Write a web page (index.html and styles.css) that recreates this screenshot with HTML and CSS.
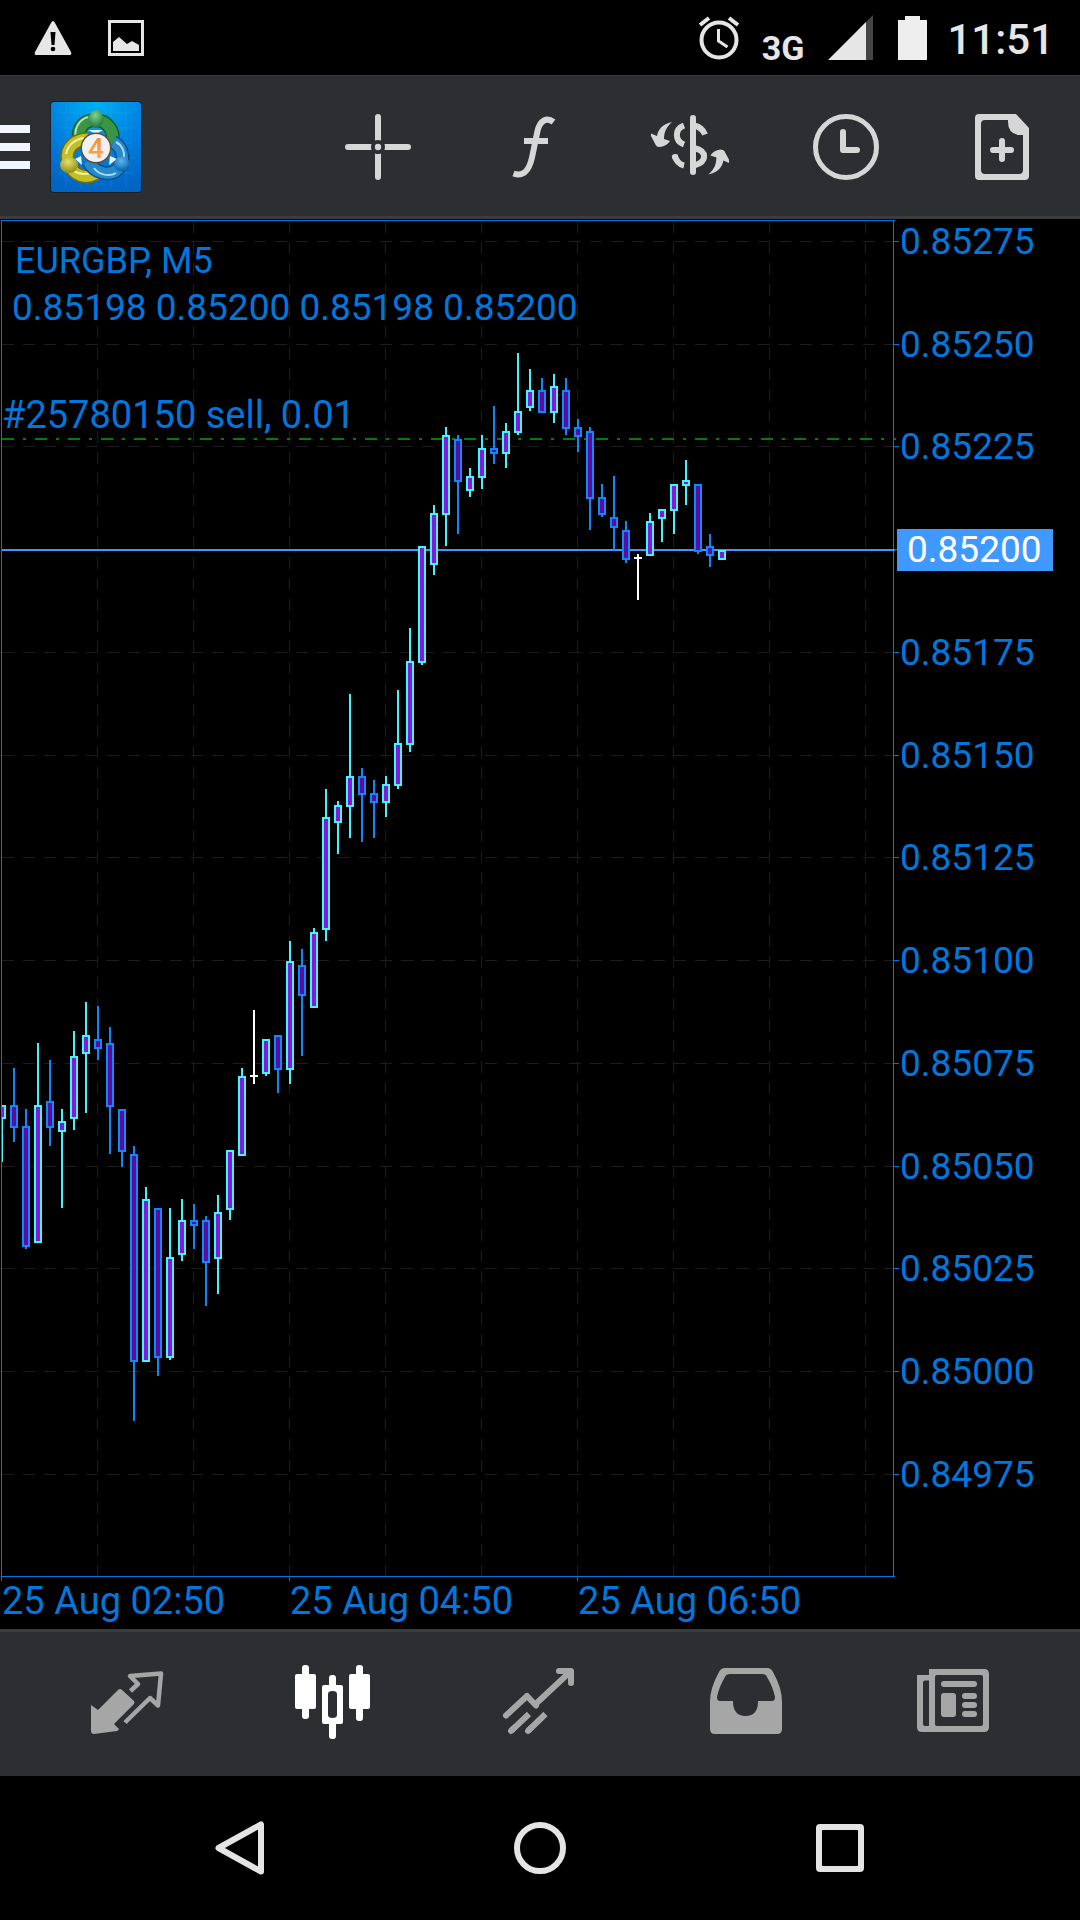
FILE: index.html
```html
<!DOCTYPE html>
<html lang="en">
<head>
<meta charset="utf-8">
<meta name="viewport" content="width=device-width, initial-scale=1">
<title>EURGBP, M5</title>
<link rel="stylesheet" href="styles.css">
</head>
<body>
<header class="status">
  <svg class="status-warning" width="38" height="34" viewBox="0 0 38 34" aria-hidden="true">
    <path fill="#e6e6e6" d="M19 0q1 0 2 2l16 29q1 3-1 3H2q-2 0-1-3L17 2q1-2 2-2Z"/>
    <path fill="#000" d="M16.500 11h5l-1 13h-3Z"/><circle cx="19" cy="28" r="2.300"/>
  </svg>
  <svg width="36" height="36" viewBox="0 0 36 36" aria-hidden="true">
    <rect x="1.500" y="1.500" width="33" height="33" fill="none" stroke="#e6e6e6" stroke-width="3"/>
    <path fill="#e6e6e6" d="M5 31v-9l6-5 8 7 5-3 7 4v6Z"/>
  </svg>
  <span class="status-space"></span>
  <svg class="status-alarm" width="42" height="44" viewBox="0 0 42 44" fill="none" stroke="#e6e6e6" aria-hidden="true">
    <circle cx="21" cy="24" r="17.500" stroke-width="4"/>
    <path stroke-width="4" d="M2 9l9-7M40 9l-9-7"/>
    <path stroke-width="3" d="M20.500 13v12l9 6"/>
  </svg>
  <span class="status-network">3G</span>
  <svg class="status-signal" width="45" height="45" viewBox="0 0 45 45" aria-hidden="true">
    <path fill="#444" d="M45 0v45H30V15Z"/><path fill="#e6e6e6" d="M38 7v38H0Z"/>
  </svg>
  <svg class="status-battery" width="29" height="44" viewBox="0 0 29 44" aria-hidden="true">
    <path fill="#eee" d="M7 0h15v4h7v40H0V4h7Z"/>
  </svg>
  <time class="status-time">11:51</time>
</header>

<div class="toolbar">
  <button class="menu" aria-label="Open menu">
    <svg width="30" height="46" viewBox="0 0 30 46" aria-hidden="true"><path fill="#f0f6ff" d="M0 1h30v8H0zM0 19h30v8H0zM0 37h30v8H0z"/></svg>
    <svg width="92" height="92" viewBox="0 0 92 92" aria-hidden="true">
      <defs>
        <radialGradient id="tile" cx=".5" cy="0" r="1"><stop offset="0" stop-color="#00b0f4"/><stop offset=".55" stop-color="#0080e0"/><stop offset="1" stop-color="#0064c4"/></radialGradient>
        <radialGradient id="green" cx=".45" cy=".3" r=".7"><stop offset="0" stop-color="#86d08c"/><stop offset="1" stop-color="#187a3a"/></radialGradient>
        <radialGradient id="yellow" cx=".45" cy=".3" r=".7"><stop offset="0" stop-color="#e4e070"/><stop offset="1" stop-color="#8f8f10"/></radialGradient>
        <radialGradient id="blue" cx=".45" cy=".3" r=".7"><stop offset="0" stop-color="#5cb8ee"/><stop offset="1" stop-color="#0460a8"/></radialGradient>
        <linearGradient id="digit" x1="0" x2="0" y1="0" y2="1"><stop offset="0" stop-color="#f08a28"/><stop offset="1" stop-color="#ffb050"/></linearGradient>
      </defs>
      <rect width="92" height="92" rx="4" fill="#1d1f24"/>
      <rect x="1" y="1" width="90" height="90" rx="3" fill="url(#tile)"/>
      <path stroke="#3aa8f4" stroke-opacity=".2" d="M8 12h76M8 27h76M8 42h76M8 57h76M8 72h76M16 4v84M31 4v84M46 4v84M61 4v84M76 4v84"/>
      <g fill="none">
        <path stroke="#116030" stroke-width="14" d="M32 44C24 30 33 19 45 19s23 12 15 28"/>
        <path stroke="#3a9644" stroke-width="11" d="M32 44C24 30 33 19 45 19s23 12 15 28"/>
        <path stroke="#b4dfae" stroke-width="2" d="M27 40C22 28 30 18 38 16"/>
        <path stroke="#706e08" stroke-width="14" d="M38 38C20 39 13 52 20 65s22 14 32 2"/>
        <path stroke="#c4bd2a" stroke-width="11" d="M38 38C20 39 13 52 20 65s22 14 32 2"/>
        <path stroke="#f4ef9c" stroke-width="2" d="M16 53C18 43 26 38 34 37M24 70c6 4 15 4 20 0"/>
        <path stroke="#09508e" stroke-width="14" d="M63 41c10 5 13 19 5 27s-24 4-30-8"/>
        <path stroke="#2589cc" stroke-width="11" d="M63 41c10 5 13 19 5 27s-24 4-30-8"/>
        <path stroke="#a8dcfa" stroke-width="2" d="M66 41c6 3 9 10 8 16M44 67c5 7 15 9 22 5"/>
      </g>
      <path fill="#eef3ee" d="M38 29h15l-7 4ZM25 58l6-3 1 9ZM67 58l-7-3-1 9Z"/>
      <ellipse cx="46" cy="18" rx="7.500" ry="9" fill="url(#green)"/>
      <ellipse cx="19" cy="64" rx="9" ry="8" fill="url(#yellow)"/>
      <ellipse cx="72" cy="63" rx="8" ry="7.500" fill="url(#blue)"/>
      <circle cx="46" cy="47" r="15.500" fill="#5a5038"/><circle cx="46" cy="47" r="14" fill="#f1f1f3"/>
      <text class="logo-digit" x="46" y="57" text-anchor="middle" fill="url(#digit)">4</text>
    </svg>
  </button>
  <div class="tools">
    <button class="tool" aria-label="Crosshair"><svg viewBox="0 0 78 78" aria-hidden="true"><g fill="#d6d6d6"><path d="M36 9a3 3 0 0 1 6 0v23.500q-3-1-6 0ZM36 69a3 3 0 0 0 6 0V45.500q-3 1-6 0ZM9 36a3 3 0 0 0 0 6h23.500q-1-3 0-6ZM69 36a3 3 0 0 1 0 6H45.500q1-3 0-6Z"/><circle cx="39" cy="39" r="3.200"/></g></svg></button>
    <button class="tool" aria-label="Indicators"><svg viewBox="0 0 78 78" fill="none" stroke="#d6d6d6" aria-hidden="true"><path stroke-width="6" d="M58.500 14C52 9 45 12 42.500 23L37 49.500C34 63 28 69 18.500 65.500M29 33h24"/></svg></button>
    <button class="tool" aria-label="Trade"><svg viewBox="0 0 78 78" fill="none" stroke="#d6d6d6" stroke-width="6" aria-hidden="true">
      <path stroke-linecap="round" d="M42 10v54"/><path d="M33 17.500C23.500 21 23.500 33 33 36.500"/><path d="M23.500 47Q26 56 33 57.500M43 17.500Q51 19 54 26.500M43 40C56.500 43 56.500 54 43 57.500"/><circle cx="24" cy="49" r="3" fill="#d6d6d6" stroke="none"/>
      <g fill="#d6d6d6" stroke="none"><path d="M21 14C11 16 7 22 6 28L0 25.500V28L5 37.500Q6 39 9 39 16 38 19 33L13 31C13 25 15 19 21 14Z"/><path transform="rotate(180 39.200 40.300)" d="M21 14C11 16 7 22 6 28L0 25.500V28L5 37.500Q6 39 9 39 16 38 19 33L13 31C13 25 15 19 21 14Z"/></g></svg></button>
    <button class="tool" aria-label="Timeframe"><svg viewBox="0 0 78 78" fill="none" stroke="#d6d6d6" aria-hidden="true"><circle cx="39" cy="39" r="30.500" stroke-width="5"/><path stroke-width="6" stroke-linecap="round" stroke-linejoin="round" d="M36 24v18h14"/></svg></button>
    <button class="tool" aria-label="New order"><svg viewBox="0 0 78 78" aria-hidden="true"><path fill="#d6d6d6" fill-rule="evenodd" d="M16 6h37l13 14v48q0 4-4 4H16q-4 0-4-4V10q0-4 4-4ZM22 12q-4 0-4 4v46q0 4 4 4h34q4 0 4-4V27h-5q-10-2-10-13v-2Z"/><path stroke="#d6d6d6" stroke-width="6" stroke-linecap="round" d="M39 33v18M30 42h18"/></svg></button>
  </div>
</div>

<main class="chart">
  <svg class="plot" viewBox="0 219 1080 1410" role="img" aria-label="EURGBP five minute candlestick chart">
    <defs><clipPath id="area"><rect x="2" y="221" width="892" height="1355"/></clipPath></defs>
    <g id="grid" class="grid"></g>
    <path class="order-line" d="M2 439H896"/>
    <path class="frame" d="M1 220.500H895M1.500 221V1581M1 1576.500H895M893.500 220V1577M289.500 1576v5M577.500 1576v5"/>
    <path class="price-line" d="M2 550H895"/>
    <g id="candles" clip-path="url(#area)"></g>
    <g class="label">
      <text class="symbol" x="15" y="273">EURGBP, M5</text>
      <text x="12" y="320">0.85198 0.85200 0.85198 0.85200</text>
      <text class="wide" x="2" y="428">#25780150 sell, 0.01</text>
      <text class="wide" x="2" y="1614">25 Aug 02:50</text>
      <text class="wide" x="290" y="1614">25 Aug 04:50</text>
      <text class="wide" x="578" y="1614">25 Aug 06:50</text>
    </g>
    <g id="scale" class="label"></g>
    <rect class="tag" x="897" y="529" width="156" height="42"/>
    <text class="label tag-text" x="907" y="562">0.85200</text>
  </svg>
</main>

<nav class="tabs" aria-label="Sections">
  <button class="tab" aria-label="Quotes"><svg viewBox="0 0 78 78" aria-hidden="true"><path fill="#a6a6a6" d="M3 40l7 5 20.500-20.500q1.500-1 3 0L46 36q1 1.500 0 3L26 59l5 5q0 1-2 2L6 69q-3 0-3-3Z"/><path fill="none" stroke="#a6a6a6" stroke-width="4.500" stroke-linejoin="round" d="M42.500 26l7.500-7-8-8 31-2.500-3 32-8-7.500L37 57.500"/></svg></button>
  <button class="tab" aria-label="Charts" aria-current="page"><svg viewBox="1 0 78 78" fill="#fff" aria-hidden="true"><rect x="1" y="9" width="21" height="35" rx="2"/><rect x="8" width="7" height="54" rx="3"/><path fill-rule="evenodd" d="M30 20h17q2 0 2 2v35q0 2-2 2H30q-2 0-2-2V22q0-2 2-2Zm8.500 6q-4.500 0-4.500 3v21q0 3 4.500 3t4.500-3V29q0-3-4.500-3Z"/><rect x="35" y="10" width="7" height="14" rx="3"/><rect x="35" y="55" width="7" height="19" rx="3"/><rect x="55" y="9" width="21" height="35" rx="2"/><rect x="62" width="7" height="56" rx="3"/></svg></button>
  <button class="tab" aria-label="Trade"><svg viewBox="0 0 78 78" fill="none" stroke="#a6a6a6" stroke-width="6" aria-hidden="true"><path stroke-linecap="round" stroke-linejoin="round" d="M5 50.500L26 31l9 9.500M58 6h12v12"/><path d="M33 40.500L70 6M10 66l18-17M27 66l17.500-17"/><path stroke-linecap="round" d="M10 66l3-3M27 66l3-3"/></svg></button>
  <button class="tab" aria-label="History"><svg viewBox="0 0 78 78" aria-hidden="true"><path fill="#a6a6a6" fill-rule="evenodd" d="M18 3h42q4 0 6 4 9 16 9 30v27q0 5-5 5H8q-5 0-5-5V37Q3 23 12 7q2-4 6-4Zm5 6q-4 0-5 3-6 10-8 20 0 4 3 4h13q0 15 12.500 15T51 36h14q3 0 3-4-2-10-8-20-1-3-5-3Z"/></svg></button>
  <button class="tab" aria-label="News"><svg viewBox="0 0 78 78" aria-hidden="true"><path fill="#a6a6a6" fill-rule="evenodd" d="M15 4h55q5 0 5 5v53q0 5-5 5H8q-5 0-5-5V10h12Zm8 6q-2 0-2 2v47q0 2 2 2h44q2 0 2-2V12q0-2-2-2Zm-12 5.500q-2 0-2 2V59q0 2 2 2h4V15.500Z"/><g fill="#a6a6a6"><rect x="27" y="16" width="36" height="6" rx="3"/><rect x="27" y="28" width="15" height="24" rx="3"/><rect x="48" y="28" width="15" height="6" rx="3"/><rect x="48" y="37" width="15" height="6" rx="3"/><rect x="48" y="46" width="15" height="6" rx="3"/></g></svg></button>
</nav>

<nav class="system" aria-label="System">
  <button class="key" aria-label="Back"><svg viewBox="0 0 60 60" aria-hidden="true"><path d="M51 6.500v47L8.500 30Z"/></svg></button>
  <button class="key" aria-label="Home"><svg viewBox="0 0 60 60" aria-hidden="true"><circle cx="30" cy="30" r="23"/></svg></button>
  <button class="key" aria-label="Recent apps"><svg viewBox="0 0 60 60" aria-hidden="true"><rect x="9" y="9" width="42" height="42" rx="1"/></svg></button>
</nav>
<script src="chart.js"></script>
</body>
</html>
```
FILE: styles.css
```css
* { box-sizing: border-box; }

body {
  margin: 0;
  min-height: 100vh;
  display: flex;
  flex-direction: column;
  background: #000;
  font-family: Roboto, "Liberation Sans", sans-serif;
}

button {
  margin: 0;
  padding: 0;
  border: 0;
  background: none;
  display: flex;
  align-items: center;
  justify-content: center;
}

svg { display: block; flex: none; }

.status {
  height: 75px;
  display: flex;
  align-items: center;
  padding: 0 26px 0 34px;
  color: #e6e6e6;
}
.status-warning { margin-right: 36px; }
.status-space { flex: 1; }
.status-alarm { margin-right: 22px; }
.status-network {
  padding-top: 20px;
  margin-right: 24px;
  font-size: 34px;
  line-height: 40px;
  font-weight: 700;
}
.status-signal { margin-right: 25px; }
.status-battery { margin-right: 20px; }
.status-time {
  padding-top: 4px;
  font-size: 42px;
  line-height: 48px;
  font-weight: 500;
}

.toolbar {
  height: 144px;
  display: flex;
  justify-content: space-between;
  background: #2d2e32;
  box-shadow: inset 0 -3px #3c3c3c, inset 0 1px #37383c;
}
.menu { gap: 20px; }
.logo-digit {
  font: 500 28px Roboto, sans-serif;
}
.tools { display: flex; }
.tool { width: 156px; }
.tool svg, .tab svg { width: 78px; height: 78px; }

.chart { flex: 1; }
.plot { width: 100%; height: auto; }
.grid {
  stroke: #1c1c1c;
  stroke-dasharray: 12 9;
}
.frame { fill: none; stroke: #0077dd; }
.order-line {
  stroke: #008000;
  stroke-width: 2;
  stroke-dasharray: 12 9 3 9;
}
.price-line { stroke: #4097ff; stroke-width: 2; }
.label { fill: #0077dd; font-size: 37px; }
.symbol { font-size: 36px; }
.wide { font-size: 38px; }
.tick { stroke: #0077dd; }
.tag { fill: #4099ff; }
.tag-text { fill: #fff; }

.up { fill: #8618dc; stroke: #44f4fb; stroke-width: 2; }
.down { fill: #5a0f9c; stroke: #0f87ff; stroke-width: 2; }
.flat { stroke: #fff; stroke-width: 2; }

.tabs {
  height: 147px;
  display: flex;
  padding: 3px 24px 0;
  background: #2d2e32;
  box-shadow: inset 0 3px #3c3c3c;
}
.tab { flex: 1; }

.system {
  height: 144px;
  display: flex;
  padding: 0 90px;
}
.key { flex: 1; }
.key svg {
  width: 60px;
  height: 60px;
  fill: none;
  stroke: #e4e4e4;
  stroke-width: 6;
  stroke-linejoin: round;
}
```
FILE: chart.js
```js
const NS = "http://www.w3.org/2000/svg";

// One entry per bar: direction, high, body top, body bottom, low.
const bars = [
  ["up",1105,1105,1119,1162],["down",1068,1105,1128,1142],["down",1109,1126,1247,1249],["up",1043,1105,1243,1243],
  ["down",1060,1101,1128,1146],["up",1109,1121,1132,1208],["up",1031,1056,1119,1130],["up",1002,1035,1054,1113],
  ["down",1006,1039,1049,1060],["down",1027,1043,1107,1154],["down",1109,1109,1152,1167],["down",1146,1154,1362,1421],
  ["up",1187,1199,1362,1362],["down",1208,1208,1358,1376],["up",1208,1257,1358,1360],["up",1199,1220,1255,1261],
  ["down",1204,1220,1226,1249],["down",1216,1220,1263,1306],["up",1195,1212,1259,1294],["up",1150,1150,1210,1220],
  ["up",1068,1076,1156,1156],["flat",1010,1075,1077,1084],["up",1039,1039,1074,1076],["down",1035,1035,1070,1093],
  ["up",941,961,1070,1084],["down",949,965,996,1056],["up",928,932,1008,1008],["up",789,817,930,941],
  ["up",801,805,823,854],["up",694,776,807,838],["down",768,776,795,842],["down",780,793,803,838],
  ["up",776,784,803,817],["up",690,743,786,789],["up",628,661,745,752],["up",546,546,663,665],
  ["up",505,513,565,575],["up",427,435,515,546],["down",435,439,482,534],["up",468,476,491,497],
  ["up",435,448,478,489],["down",406,448,454,464],["up",423,431,454,468],["up",353,411,433,435],
  ["up",369,390,408,411],["down",378,390,413,413],["up",374,386,413,423],["down",378,390,429,435],
  ["down",419,427,437,452],["down",427,431,499,530],["down",484,497,515,517],["down",476,517,528,550],
  ["down",521,530,560,563],["flat",554,557,559,600],["up",513,521,556,556],["up",509,509,519,542],
  ["up",484,484,511,534],["up",460,480,486,505],["down",484,484,552,554],["down",534,546,556,567],
  ["up",550,550,560,560]
];

const scale = [
  ["0.85275",241],["0.85250",344],["0.85225",446],["",549],["0.85175",652],["0.85150",755],["0.85125",857],
  ["0.85100",960],["0.85075",1063],["0.85050",1166],["0.85025",1268],["0.85000",1371],["0.84975",1474]
];

function add(parent, name, attrs, text) {
  const node = document.createElementNS(NS, name);
  for (const key in attrs) node.setAttribute(key, attrs[key]);
  if (text) node.textContent = text;
  parent.appendChild(node);
}

const grid = document.getElementById("grid");
const labels = document.getElementById("scale");
const candles = document.getElementById("candles");

for (let x = 97; x < 893; x += 96) {
  add(grid, "path", { d: `M${x + 0.5} 221V1576` });
}
for (const [price, y] of scale) {
  add(grid, "path", { d: `M2 ${y + 0.5}H893` });
  add(labels, "path", { class: "tick", d: `M894 ${y + 0.5}h5` });
  if (price) add(labels, "text", { x: 900, y: y + 13 }, price);
}

bars.forEach(([kind, high, top, bottom, low], i) => {
  const x = 12 * i + 2;
  if (kind === "flat") {
    add(candles, "path", { class: kind, d: `M${x} ${high}V${low}M${x - 4} ${top + 1}h8` });
    return;
  }
  add(candles, "path", { class: kind, d: `M${x} ${high}V${top}M${x} ${bottom}V${low}` });
  add(candles, "rect", { class: kind, x: x - 3, y: top + 1, width: 6, height: bottom - top - 2 });
});
```
